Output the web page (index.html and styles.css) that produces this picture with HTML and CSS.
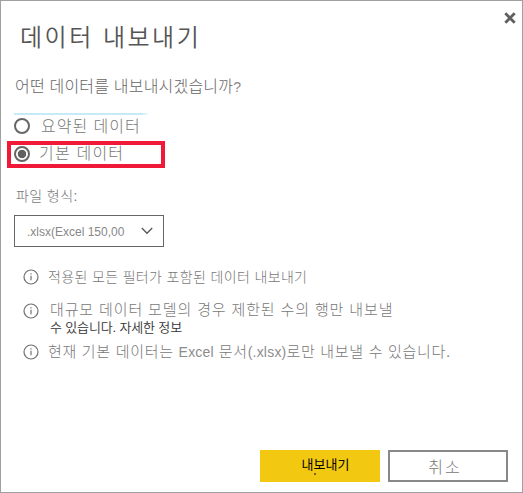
FILE: index.html
```html
<!DOCTYPE html>
<html lang="ko">
<head>
<meta charset="utf-8">
<title>데이터 내보내기</title>
<link rel="stylesheet" href="styles.css">
</head>
<body>
<main class="dialog">
  <header class="header">
    <h1 class="title">데이터 내보내기</h1>
    <button class="close" aria-label="닫기"><svg width="12" height="12" viewBox="0 0 12 12"><path d="M1.3 1.3 10.7 10.7M10.7 1.3 1.3 10.7"/></svg></button>
  </header>
  <p class="question">어떤 데이터를 내보내시겠습니까<span class="mark">?</span></p>
  <div class="options">
    <label class="option"><span class="radio"></span><span class="summary">요약된 데이터</span></label>
    <label class="option selected"><span class="radio checked"></span><span class="underlying">기본 데이터</span></label>
  </div>
  <p class="format">파일 형식:</p>
  <div class="select"><span>.xlsx(Excel 150,00</span><svg width="12" height="8" viewBox="0 0 12 8"><path d="M.8 1 6 6.3 11.2 1"/></svg></div>
  <ul class="notes">
    <li class="note first"><svg class="info" width="16" height="16" viewBox="0 0 16 16"><circle cx="8" cy="8" r="7"/><path d="M8 6.7V11.3M8 4.2V5.4"/></svg><span class="filters">적용된 모든 필터가 포함된 데이터 내보내기</span></li>
    <li class="note second"><svg class="info" width="16" height="16" viewBox="0 0 16 16"><circle cx="8" cy="8" r="7"/><path d="M8 6.7V11.3M8 4.2V5.4"/></svg><div class="lines"><span class="limit">대규모 데이터 모델의 경우 제한된 수의 행만 내보낼</span><span class="more">수 있습니다. 자세한 정보</span></div></li>
    <li class="note third"><svg class="info" width="16" height="16" viewBox="0 0 16 16"><circle cx="8" cy="8" r="7"/><path d="M8 6.7V11.3M8 4.2V5.4"/></svg><p class="excel">현재 기본 데이터는 <span class="latin">Excel</span> 문서<span class="latin">(.xlsx)</span>로만 내보낼 수 있습니다.</p></li>
  </ul>
  <footer class="footer">
    <button class="button primary">내보내기</button>
    <button class="button secondary">취소</button>
  </footer>
</main>
</body>
</html>
```
FILE: styles.css
```css
* { box-sizing: border-box; }
body { margin: 0; background: #fff; }
h1, p, ul { margin: 0; padding: 0; font-weight: 300; }
button { font: inherit; padding: 0; border: 0; background: none; }
svg { display: block; flex: none; fill: none; }
.dialog {
  width: 523px; height: 493px; border: 1px solid #a0a0a0;
  display: flex; flex-direction: column; overflow: hidden;
  font-family: "Liberation Sans", "Noto Sans CJK KR", sans-serif;
  font-weight: 300; color: #777; white-space: nowrap;
}
.header { display: flex; justify-content: space-between; height: 72px; padding: 20px 6px 0 19px; }
.title { font-size: 24px; font-weight: 350; line-height: 34px; letter-spacing: 2.5px; color: #555; }
.close { width: 12px; height: 12px; margin-top: -9px; }
.close path { stroke: #606060; stroke-width: 2.8; }
.question { height: 28px; margin-left: 14px; font-size: 16px; line-height: 28px; letter-spacing: .2px; color: #666; }
.mark { font-size: 14px; color: #888; }
.options { width: 158px; margin: 12px 0 0 6px; display: flex; flex-direction: column; }
.options::before { content: ""; height: 2px; width: 135px; margin-left: 7px; background: linear-gradient(90deg, #c6ebf6 95%, #fff); }
.option { display: flex; align-items: center; height: 26px; padding: 0 0 3px 7px; font-size: 16px; line-height: 24px; }
.selected { border: 4px solid #f01937; height: 27px; padding: 0 0 1px 3px; }
.radio { width: 16px; height: 16px; border: 2px solid #666; border-radius: 50%; flex: none; margin-bottom: 1px; }
.checked { background: radial-gradient(circle, #606060 3.8px, #fff 4.6px); margin-bottom: 0; }
.summary { margin-left: 11px; letter-spacing: 1px; }
.underlying { margin-left: 9px; letter-spacing: 1.2px; }
.format { margin: 16px 0 0 15px; height: 24px; font-size: 14px; line-height: 24px; letter-spacing: .4px; }
.select { display: flex; justify-content: space-between; align-items: center; width: 150px; height: 32px; margin: 7px 0 0 13px; padding: 2px 10px 0 12px; border: 1px solid #666; font-size: 12px; color: #888; }
.select svg { margin-top: -3px; }
.select svg path { stroke: #555; stroke-width: 1.3; }
.notes { list-style: none; margin-left: 22px; }
.note { display: flex; align-items: flex-start; }
.info { stroke: #707070; stroke-width: 1.2; margin-top: 2px; }
.first { height: 34px; margin-top: 20px; }
.second { height: 41px; }
.third { height: 24px; }
.first span { margin-left: 9px; font-size: 14px; line-height: 20px; letter-spacing: .35px; }
.lines { display: flex; flex-direction: column; margin-left: 11px; }
.limit { font-size: 15px; line-height: 18px; letter-spacing: .87px; }
.more { font-size: 13px; font-weight: 350; line-height: 18px; letter-spacing: -.15px; color: #333; }
.excel { margin-left: 9px; font-size: 15px; line-height: 20px; letter-spacing: .7px; }
.latin { font-size: 14px; letter-spacing: .2px; color: #8c8c8c; }
.footer { display: flex; gap: 8px; justify-content: flex-end; margin: auto 14px 10px 0; }
.button { width: 120px; height: 32px; }
.primary { position: relative; background: #f2c811; color: #000; font-size: 13px; font-weight: 400; padding: 0 0 5px 11px; }
.primary::after { content: ""; position: absolute; left: 54px; top: 23px; width: 2px; height: 2px; background: #796409; }
.secondary { border: 2px solid #888; color: #777; font-size: 16px; letter-spacing: 2px; padding-right: 6px; }
```
